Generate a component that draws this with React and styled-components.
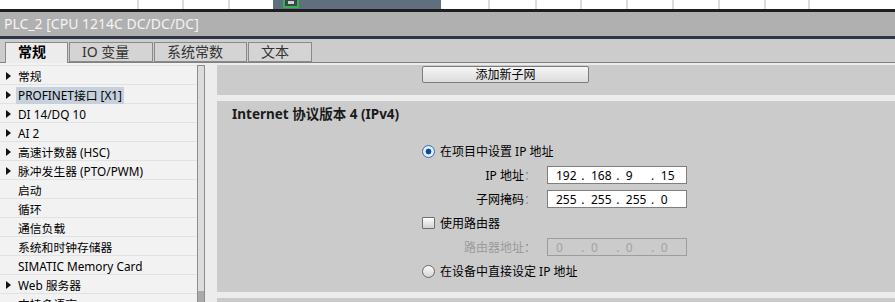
import React from "react";
import styled, { createGlobalStyle } from "styled-components";

const GlobalStyle = createGlobalStyle`
  html, body {
    margin: 0;
    padding: 0;
    width: 895px;
    height: 302px;
    overflow: hidden;
    background: #ffffff;
  }
  body {
    font-family: "Noto Sans", "Noto Sans CJK SC", sans-serif;
    font-size: 12px;
    color: #000;
  }
`;

const Page = styled.div`
  width: 895px;
  height: 302px;
  display: flex;
  flex-direction: column;
  overflow: hidden;
`;

const TopStrip = styled.div`
  height: 9px;
  flex-shrink: 0;
  display: flex;
  background: #ffffff;
  overflow: hidden;
`;

const DesignerCell = styled.div`
  flex-shrink: 0;
  width: ${(p) => p.$w}px;
  box-sizing: border-box;
  border-right: ${(p) => (p.$line ? "2px solid #dcdcdc" : "none")};
`;

const EditorBlock = styled.div`
  flex-shrink: 0;
  width: 168px;
  background: #5f6f80;
  padding-left: 10px;
  box-sizing: border-box;
  display: flex;
  align-items: flex-start;
`;

const TitleBar = styled.div`
  flex-shrink: 0;
  height: 24px;
  line-height: 24px;
  border-top: 3px solid #1e1e1e;
  border-bottom: 3px solid #2e3546;
  background: #b0b0b0;
  color: #f4f4f4;
  font-size: 14px;
  padding-left: 4px;
`;

const TabBar = styled.div`
  flex-shrink: 0;
  height: 23px;
  border-bottom: 1px solid #808080;
  background: #cccccc;
  display: flex;
  align-items: flex-end;
  gap: 1px;
  padding-left: 5px;
`;

const Tab = styled.div`
  width: ${(p) => p.$w}px;
  height: ${(p) => (p.$active ? 21 : 20)}px;
  margin-bottom: ${(p) => (p.$active ? -1 : 0)}px;
  box-sizing: border-box;
  border: 1px solid #8a8a8a;
  border-bottom: ${(p) => (p.$active ? "none" : "1px solid #8a8a8a")};
  background: ${(p) => (p.$active ? "#ececec" : "#d4d4d4")};
  padding-left: 12px;
  font-size: 14px;
  line-height: 18px;
  font-weight: ${(p) => (p.$active ? 700 : 400)};
  color: ${(p) => (p.$active ? "#000" : "#333")};
  white-space: nowrap;
`;

const Content = styled.div`
  flex: 1;
  min-height: 0;
  display: flex;
  background: #ececec;
`;

const TreePanel = styled.div`
  width: 197px;
  flex-shrink: 0;
  padding-top: 2px;
  background: #f2f2f2;
  overflow: hidden;
`;

const TreeRow = styled.div`
  height: 19px;
  box-sizing: border-box;
  border-top: 1px solid #e2e2e2;
  padding-top: 2px;
  display: flex;
  align-items: center;
  padding-left: 6px;
  white-space: nowrap;
`;

const Expander = styled.span`
  width: 0;
  height: 0;
  border-left: 5px solid ${(p) => (p.$hidden ? "transparent" : "#111")};
  border-top: 4px solid transparent;
  border-bottom: 4px solid transparent;
  margin-right: 7px;
  flex-shrink: 0;
`;

const TreeLabel = styled.span`
  line-height: 17px;
  padding: 0 2px;
  margin-left: -2px;
  font-size: 11.8px;
  background: ${(p) => (p.$selected ? "#c6d1dd" : "transparent")};
`;

const ScrollColumn = styled.div`
  width: 20px;
  flex-shrink: 0;
  padding-top: 2px;
  display: flex;
  flex-direction: column;
`;

const ScrollTrack = styled.div`
  flex: 1;
  width: 6px;
  border: 1px solid #8d8d8d;
  border-bottom: none;
  background: #dcdcdc;
  display: flex;
  flex-direction: column;
  justify-content: flex-end;
`;

const ScrollThumb = styled.div`
  height: 11px;
  background: #a9a9a9;
`;

const MainPanel = styled.div`
  flex: 1;
  min-width: 0;
  padding-top: 2px;
  display: flex;
  flex-direction: column;
  gap: ${(p) => p.$gap}px;
  overflow: hidden;
`;

const Section = styled.div`
  flex-shrink: 0;
  height: ${(p) => (p.$h ? `${p.$h}px` : "auto")};
  flex-grow: ${(p) => (p.$h ? 0 : 1)};
  background: #cbcbcb;
  box-sizing: border-box;
  padding: ${(p) => p.$pad || "0"};
`;

const PushButton = styled.div`
  width: 167px;
  height: 17px;
  box-sizing: border-box;
  margin: 1px 0 0 205px;
  border: 1px solid #7c7c7c;
  border-radius: 2px;
  background: linear-gradient(#f6f6f6, #dcdcdc);
  text-align: center;
  font-size: 12px;
  line-height: 15px;
`;

const SectionHeading = styled.div`
  font-size: 13.5px;
  font-weight: 700;
  line-height: 18px;
  color: #1a1a1a;
`;

const Form = styled.div`
  margin: 16px 0 0 190px;
  display: grid;
  grid-template-columns: 125px 140px;
  grid-auto-rows: 24px;
  align-items: center;
`;

const OptionRow = styled.label`
  grid-column: 1 / -1;
  display: flex;
  align-items: center;
  gap: 5px;
  white-space: nowrap;
`;

const Radio = styled.span`
  width: 13px;
  height: 13px;
  box-sizing: border-box;
  border-radius: 50%;
  flex-shrink: 0;
  border: 1px solid ${(p) => (p.$checked ? "#2f6db6" : "#6b6b6b")};
  background: ${(p) =>
    p.$checked
      ? "radial-gradient(circle, #0b4c9e 0 2.6px, #e4eefa 3.2px)"
      : "linear-gradient(#fbfbfb, #d4d4d4)"};
`;

const Checkbox = styled.span`
  width: 13px;
  height: 12px;
  box-sizing: border-box;
  flex-shrink: 0;
  border: 1px solid #6f6f6f;
  border-radius: 1px;
  background: linear-gradient(#ffffff, #d2d2d2);
`;

const FieldLabel = styled.span`
  justify-self: end;
  display: flex;
  padding-right: 11px;
  white-space: nowrap;
  color: ${(p) => (p.$disabled ? "#9b9b9b" : "#000")};
`;

const Colon = styled.span`
  color: #8a8a8a;
  width: 12px;
`;

const AddressBox = styled.div`
  width: 140px;
  height: 18px;
  box-sizing: border-box;
  border: 1px solid ${(p) => (p.$disabled ? "#9d9d9d" : "#7f7f7f")};
  background: ${(p) => (p.$disabled ? "transparent" : "#ffffff")};
  color: ${(p) => (p.$disabled ? "#a2a2a2" : "#000")};
  padding-left: 8px;
  display: flex;
  align-items: center;
  font-size: 12px;
`;

const Octet = styled.span`
  width: 26px;
`;

const Dot = styled.span`
  width: 10px;
`;

const gridCells = [
  { w: 139, line: true },
  { w: 45, line: true },
  { w: 46, line: true },
  { w: 43, line: false },
];
const gridCellsRight = [
  { w: 49, line: true },
  { w: 47, line: true },
  { w: 45, line: true },
  { w: 46, line: true },
  { w: 46, line: true },
  { w: 46, line: true },
  { w: 46, line: true },
  { w: 44, line: true },
  { w: 90, line: false },
];

const treeItems = [
  { label: "常规", exp: true },
  { label: "PROFINET接口 [X1]", exp: true, selected: true },
  { label: "DI 14/DQ 10", exp: true },
  { label: "AI 2", exp: true },
  { label: "高速计数器 (HSC)", exp: true },
  { label: "脉冲发生器 (PTO/PWM)", exp: true },
  { label: "启动" },
  { label: "循环" },
  { label: "通信负载" },
  { label: "系统和时钟存储器" },
  { label: "SIMATIC Memory Card" },
  { label: "Web 服务器", exp: true },
  { label: "支持多语言" },
];

const tabs = [
  { label: "常规", w: 63, active: true },
  { label: "IO 变量", w: 84 },
  { label: "系统常数", w: 93 },
  { label: "文本", w: 64 },
];

function Address({ values, disabled }) {
  return (
    <AddressBox $disabled={disabled}>
      {values.map((v, i) => (
        <React.Fragment key={i}>
          <Octet>{v}</Octet>
          {i < values.length - 1 && <Dot>.</Dot>}
        </React.Fragment>
      ))}
    </AddressBox>
  );
}

function ModuleIcon() {
  return (
    <svg width="16" height="8" viewBox="0 0 16 8">
      <rect x="1" y="-1" width="14" height="8" fill="#3b4650" stroke="#34b34a" strokeWidth="2" />
      <rect x="5" y="1" width="6" height="3" fill="#d0d0d0" />
    </svg>
  );
}

export default function App() {
  return (
    <Page>
      <GlobalStyle />
      <TopStrip>
        {gridCells.map((c, i) => (
          <DesignerCell key={i} $w={c.w} $line={c.line} />
        ))}
        <EditorBlock>
          <ModuleIcon />
        </EditorBlock>
        {gridCellsRight.map((c, i) => (
          <DesignerCell key={i} $w={c.w} $line={c.line} />
        ))}
      </TopStrip>
      <TitleBar>PLC_2 [CPU 1214C DC/DC/DC]</TitleBar>
      <TabBar>
        {tabs.map((t) => (
          <Tab key={t.label} $w={t.w} $active={t.active}>
            {t.label}
          </Tab>
        ))}
      </TabBar>
      <Content>
        <TreePanel>
          {treeItems.map((it) => (
            <TreeRow key={it.label}>
              <Expander $hidden={!it.exp} />
              <TreeLabel $selected={it.selected}>{it.label}</TreeLabel>
            </TreeRow>
          ))}
        </TreePanel>
        <ScrollColumn>
          <ScrollTrack>
            <ScrollThumb />
          </ScrollTrack>
        </ScrollColumn>
        <MainPanel $gap={6}>
          <Section $h={30}>
            <PushButton>添加新子网</PushButton>
          </Section>
          <Section $h={191} $pad="4px 0 0 15px">
            <SectionHeading>Internet 协议版本 4 (IPv4)</SectionHeading>
            <Form>
              <OptionRow>
                <Radio $checked />
                在项目中设置 IP 地址
              </OptionRow>
              <FieldLabel>
                IP 地址<Colon>：</Colon>
              </FieldLabel>
              <Address values={["192", "168", "9", "15"]} />
              <FieldLabel>
                子网掩码<Colon>：</Colon>
              </FieldLabel>
              <Address values={["255", "255", "255", "0"]} />
              <OptionRow>
                <Checkbox />
                使用路由器
              </OptionRow>
              <FieldLabel $disabled>
                路由器地址<Colon>：</Colon>
              </FieldLabel>
              <Address values={["0", "0", "0", "0"]} disabled />
              <OptionRow>
                <Radio />
                在设备中直接设定 IP 地址
              </OptionRow>
            </Form>
          </Section>
          <Section />
        </MainPanel>
      </Content>
    </Page>
  );
}
